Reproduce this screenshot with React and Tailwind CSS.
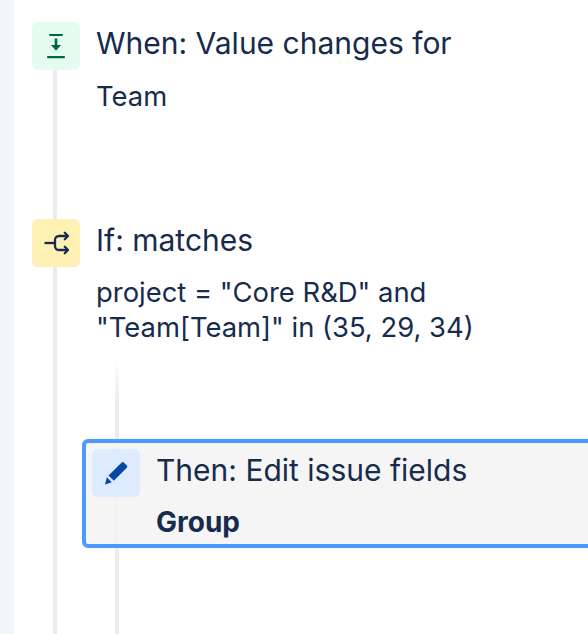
const font = { fontFamily: "Inter, sans-serif" };

function Rail({ className }) {
  return <div className={"ml-[21px] w-1 bg-[#ebecf0] " + className} />;
}

function DownloadIcon() {
  return (
    <svg width="48" height="48" viewBox="0 0 48 48" fill="#006644">
      <rect x="17" y="12" width="14" height="2" rx="1" />
      <rect x="15" y="34" width="18" height="2.200" rx="1" />
      <path d="M22.700 16.500h2.600V23H29l-5 5.800L19 23h3.700z" />
    </svg>
  );
}

function BranchIcon() {
  return (
    <svg width="48" height="48" viewBox="0 0 48 48" fill="none" stroke="#172b4d" strokeWidth="2.300">
      <path d="M12.500 24H23" />
      <path d="M35 17h-8a4 4 0 0 0-4 4v6a4 4 0 0 0 4 4h8" />
      <path d="M32.800 13.800 36 17l-3.200 3.200M32.800 27.800 36 31l-3.200 3.200" strokeLinecap="round" strokeLinejoin="round" />
    </svg>
  );
}

function PencilIcon() {
  return (
    <svg width="48" height="48" viewBox="0 0 48 48" fill="#0747a6">
      <path d="M29.700 13.600a1.500 1.500 0 0 1 2.100 0l3 3a1.500 1.500 0 0 1 0 2.100L21.800 31.700l-5.300-5.300z" />
      <path d="M14.800 28.200 19.800 33.300 13 35.500z" />
    </svg>
  );
}

export default function App() {
  return (
    <div className="flex h-[634px] w-[588px] overflow-hidden bg-white text-[#172b4d]" style={font}>
      <div className="w-3.5 shrink-0 bg-[#f4f5f7]" />
      <div className="min-w-0 flex-1 pl-[18px]">
        <div className="flex">
          <div className="flex w-12 shrink-0 flex-col pt-[22px]">
            <div className="size-12 rounded-md bg-[#e3fcef]">
              <DownloadIcon />
            </div>
            <Rail className="h-[149px]" />
          </div>
          <div className="ml-4 pt-[21px]">
            <div className="text-[30px] leading-[44px] whitespace-nowrap">When: Value changes for</div>
            <div className="mt-[13px] text-[27.4px] leading-[36px]">Team</div>
          </div>
        </div>
        <div className="flex">
          <div className="flex w-12 shrink-0 flex-col">
            <div className="size-12 rounded-md bg-[#fff0b3]">
              <BranchIcon />
            </div>
            <Rail className="h-[367px]" />
          </div>
          <div className="ml-4 min-w-0 flex-1 -mt-px">
            <div className="text-[30px] leading-[44px] whitespace-nowrap">If: matches</div>
            <div className="mt-[13px] text-[27.4px] leading-[35px] whitespace-nowrap">
              project = "Core R&amp;D" and
              <br />
              "Team[Team]" in (35, 29, 34)
            </div>
            <div className="relative pt-[94px]">
              <div className="absolute top-[15px] left-[19px] h-[274px] w-1 bg-gradient-to-b from-white to-[#ebecf0] to-[15%]" />
              <div className="relative ml-[-14px] flex h-[109px] w-[600px] rounded-md border-4 border-[#4c9aff] bg-[#f4f4f4]/90 pt-[6px] pl-[6px]">
                <div className="size-12 shrink-0 rounded-md bg-[#deebff]">
                  <PencilIcon />
                </div>
                <div className="ml-4 -mt-px">
                  <div className="text-[30px] leading-[44px] whitespace-nowrap">Then: Edit issue fields</div>
                  <div className="mt-[12px] text-[28px] leading-[36px] font-bold">Group</div>
                </div>
              </div>
            </div>
          </div>
        </div>
      </div>
    </div>
  );
}
